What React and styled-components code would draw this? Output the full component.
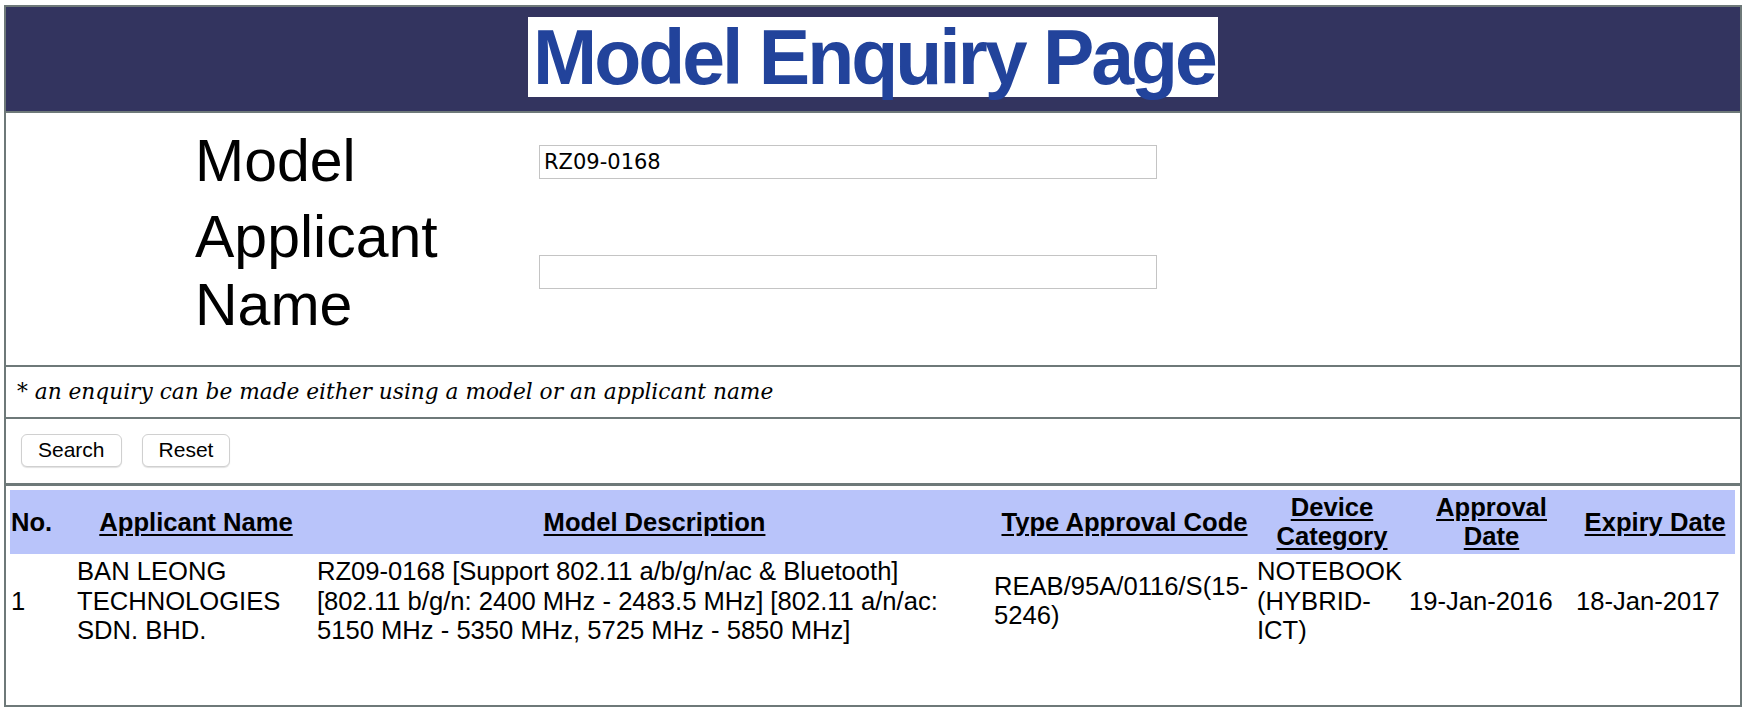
import React from 'react';
import styled, { createGlobalStyle } from 'styled-components';

const GlobalStyle = createGlobalStyle`
  body {
    margin: 0;
    background: #fff;
    font-family: 'Liberation Sans', Arial, Helvetica, sans-serif;
    color: #000;
  }
`;

const Frame = styled.div`
  box-sizing: border-box;
  width: 1738px;
  margin: 5px 0 0 4px;
  border: 2px solid #6e7979;
`;

const Header = styled.header`
  box-sizing: border-box;
  height: 106px;
  padding-top: 10px;
  background: #33345f;
  border-bottom: 2px solid #6e7979;
  text-align: center;
`;

const Title = styled.h1`
  display: inline-block;
  margin: 0;
  padding: 0 3px 0 5px;
  background: #fff;
  color: #22439b;
  font-size: 77px;
  font-weight: bold;
  letter-spacing: -3px;
  line-height: 80px;
`;

const FormSection = styled.section`
  box-sizing: border-box;
  height: 254px;
  padding: 15px 0 0 189px;
  border-bottom: 2px solid #6e7979;
`;

const FormGrid = styled.div`
  display: grid;
  grid-template-columns: 344px 618px;
  row-gap: 8px;
  align-items: center;
`;

const Label = styled.label`
  font-size: 59px;
  line-height: 1.15;
`;

const TextInput = styled.input`
  box-sizing: border-box;
  width: 618px;
  height: 34px;
  padding: 0 4px;
  border: 1px solid #c4c4c4;
  font-family: 'DejaVu Sans', 'Liberation Sans', sans-serif;
  font-size: 21px;
  color: #000;
  outline: none;
`;

const Note = styled.div`
  box-sizing: border-box;
  height: 52px;
  display: flex;
  align-items: center;
  padding: 0 0 2px 11px;
  border-bottom: 2px solid #6e7979;
  font-family: 'DejaVu Serif', Georgia, serif;
  font-style: italic;
  font-size: 21.7px;
`;

const ButtonBar = styled.div`
  box-sizing: border-box;
  height: 67px;
  display: flex;
  align-items: center;
  gap: 20px;
  padding: 0 0 2px 15px;
  border-bottom: 3px solid #6e7979;
`;

const Button = styled.button`
  height: 33px;
  padding: 0 16px;
  background: #fff;
  border: 1px solid #d0d0d0;
  border-radius: 6px;
  box-shadow: 0 1px 1px rgba(0, 0, 0, 0.12);
  font-family: 'Liberation Sans', Arial, sans-serif;
  font-size: 21px;
  color: #000;
`;

const Results = styled.section`
  box-sizing: border-box;
  height: 219px;
  padding: 4px 5px 4px 4px;
`;

const Table = styled.table`
  width: 1725px;
  table-layout: fixed;
  border-collapse: collapse;
  font-size: 25.6px;
  line-height: 1.15;
`;

const HeadRow = styled.tr`
  background: #b9c4fa;
`;

const Th = styled.th`
  padding: 3px 1px 2.5px;
  font-weight: bold;
  text-align: ${({ $left }) => ($left ? 'left' : 'center')};
  vertical-align: middle;
`;

const HeadLink = styled.span`
  text-decoration: underline;
  text-underline-offset: 3px;
`;

const Td = styled.td`
  padding: 3px ${({ $padRight }) => $padRight || 1}px 1px 1px;
  vertical-align: middle;
`;

const columns = [
  { label: 'No.', width: 66, left: true, plain: true },
  { label: 'Applicant Name', width: 240 },
  { label: 'Model Description', width: 677, padRight: 14 },
  { label: 'Type Approval Code', width: 263 },
  { label: 'Device Category', width: 152 },
  { label: 'Approval Date', width: 167 },
  { label: 'Expiry Date', width: 160 },
];

const rows = [
  [
    '1',
    'BAN LEONG TECHNOLOGIES SDN. BHD.',
    'RZ09-0168 [Support 802.11 a/b/g/n/ac & Bluetooth] [802.11 b/g/n: 2400 MHz - 2483.5 MHz] [802.11 a/n/ac: 5150 MHz - 5350 MHz, 5725 MHz - 5850 MHz]',
    'REAB/95A/0116/S(15-5246)',
    'NOTEBOOK (HYBRID-ICT)',
    '19-Jan-2016',
    '18-Jan-2017',
  ],
];

const App = () => (
  <>
    <GlobalStyle />
    <Frame>
      <Header>
        <Title>Model Enquiry Page</Title>
      </Header>

      <FormSection>
        <FormGrid>
          <Label htmlFor="model">Model</Label>
          <TextInput id="model" defaultValue="RZ09-0168" />
          <Label htmlFor="applicant">
            Applicant
            <br />
            Name
          </Label>
          <TextInput id="applicant" defaultValue="" />
        </FormGrid>
      </FormSection>

      <Note>* an enquiry can be made either using a model or an applicant name</Note>

      <ButtonBar>
        <Button type="button">Search</Button>
        <Button type="button">Reset</Button>
      </ButtonBar>

      <Results>
        <Table>
          <colgroup>
            {columns.map((c) => (
              <col key={c.label} style={{ width: c.width }} />
            ))}
          </colgroup>
          <thead>
            <HeadRow>
              {columns.map((c) => (
                <Th key={c.label} $left={c.left}>
                  {c.plain ? c.label : <HeadLink>{c.label}</HeadLink>}
                </Th>
              ))}
            </HeadRow>
          </thead>
          <tbody>
            {rows.map((r, i) => (
              <tr key={i}>
                {r.map((cell, j) => (
                  <Td key={j} $padRight={columns[j].padRight}>
                    {cell}
                  </Td>
                ))}
              </tr>
            ))}
          </tbody>
        </Table>
      </Results>
    </Frame>
  </>
);

export default App;
